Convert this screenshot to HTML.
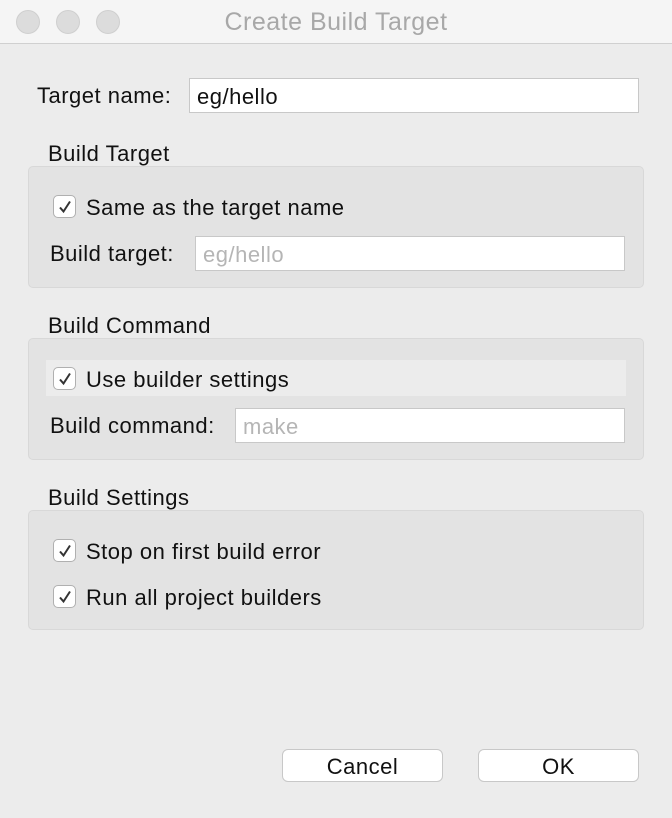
<!DOCTYPE html>
<html><head><style>
*{margin:0;padding:0;box-sizing:border-box}
body{width:672px;height:818px;background:#ececec;font-family:"Liberation Sans",sans-serif;font-size:22px;letter-spacing:0.5px;color:#111;position:relative;overflow:hidden}
.a{position:absolute;white-space:nowrap}
.tb{left:0;top:0;width:672px;height:44px;background:#f5f5f5;border-bottom:1px solid #d0d0d0}
.tl{width:24px;height:24px;border-radius:50%;background:#dcdcdc;border:1px solid #cfcfcf;top:10px}
.title{left:0;width:672px;top:8px;text-align:center;color:#a8a8a8;font-size:25px}
.box{background:#e3e3e3;border:1px solid #d8d8d8;border-radius:5px;left:28px;width:616px}
.in{background:#fff;border:1px solid #c8c8c8;height:35px;padding:6px 7px;line-height:24px}
.ph{color:#b5b5b5}
.cb{width:23px;height:23px;border:1px solid #b0b0b0;border-radius:5px;background:#fff}
.cb svg{position:absolute;left:3px;top:3px}
.lbl{line-height:26px}
.btn{background:#fff;border:1px solid #c8c8c8;border-radius:6px;height:33px;top:749px;width:161px;text-align:center;line-height:34px}
</style></head><body>
<div class="a tb"></div>
<div class="a tl" style="left:16px"></div>
<div class="a tl" style="left:56px"></div>
<div class="a tl" style="left:96px"></div>
<div class="a title">Create Build Target</div>

<div class="a lbl" style="left:37px;top:83px">Target name:</div>
<div class="a in" style="left:189px;top:78px;width:450px">eg/hello</div>

<div class="a lbl" style="left:48px;top:141px">Build Target</div>
<div class="a box" style="top:166px;height:122px"></div>
<div class="a cb" style="left:53px;top:195px"><svg width="16" height="16" viewBox="0 0 16 16"><path d="M3 8.5 L6.5 12.5 L13 2.5" fill="none" stroke="#333" stroke-width="2"/></svg></div>
<div class="a lbl" style="left:86px;top:195px">Same as the target name</div>
<div class="a lbl" style="left:50px;top:241px">Build target:</div>
<div class="a in ph" style="left:195px;top:236px;width:430px">eg/hello</div>

<div class="a lbl" style="left:48px;top:313px">Build Command</div>
<div class="a box" style="top:338px;height:122px"></div>
<div class="a" style="left:46px;top:360px;width:580px;height:36px;background:#ececec"></div>
<div class="a cb" style="left:53px;top:367px"><svg width="16" height="16" viewBox="0 0 16 16"><path d="M3 8.5 L6.5 12.5 L13 2.5" fill="none" stroke="#333" stroke-width="2"/></svg></div>
<div class="a lbl" style="left:86px;top:367px">Use builder settings</div>
<div class="a lbl" style="left:50px;top:413px">Build command:</div>
<div class="a in ph" style="left:235px;top:408px;width:390px">make</div>

<div class="a lbl" style="left:48px;top:485px">Build Settings</div>
<div class="a box" style="top:510px;height:120px"></div>
<div class="a cb" style="left:53px;top:539px"><svg width="16" height="16" viewBox="0 0 16 16"><path d="M3 8.5 L6.5 12.5 L13 2.5" fill="none" stroke="#333" stroke-width="2"/></svg></div>
<div class="a lbl" style="left:86px;top:539px">Stop on first build error</div>
<div class="a cb" style="left:53px;top:585px"><svg width="16" height="16" viewBox="0 0 16 16"><path d="M3 8.5 L6.5 12.5 L13 2.5" fill="none" stroke="#333" stroke-width="2"/></svg></div>
<div class="a lbl" style="left:86px;top:585px">Run all project builders</div>

<div class="a btn" style="left:282px">Cancel</div>
<div class="a btn" style="left:478px">OK</div>
</body></html>
